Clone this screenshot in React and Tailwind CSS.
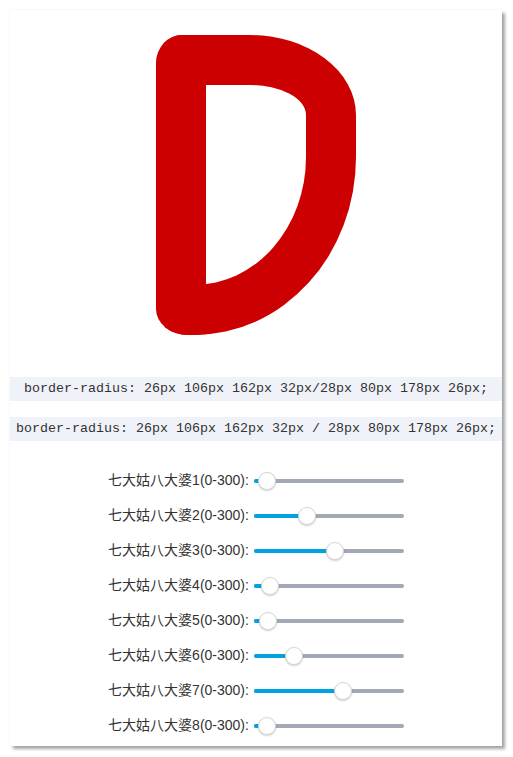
import React, { useState } from 'react'

const labels = [1, 2, 3, 4, 5, 6, 7, 8]

/* ---------- Slider ---------- */

const Slider = ({ value, onChange }) => {
  const pct = (value / 300) * 100
  return (
    <div className="relative w-[150px] h-[20px] flex items-center">
      <div className="w-full h-[4px] rounded-full bg-[#a2a8b5]" />
      <div
        className="absolute left-0 h-[4px] rounded-full bg-[#00a2e0]"
        style={{ width: `${pct}%` }}
      />
      <div
        className="absolute w-[18px] h-[18px] -translate-x-1/2 rounded-full bg-white border border-[#d6d6d6] shadow-[0_1px_2px_rgba(0,0,0,0.2)]"
        style={{ left: `${pct}%` }}
      />
      <input
        type="range"
        min="0"
        max="300"
        value={value}
        onChange={(e) => onChange(Number(e.target.value))}
        className="absolute inset-0 w-full opacity-0 cursor-pointer"
      />
    </div>
  )
}

/* ---------- Main ---------- */

const App = () => {
  const [vals, setVals] = useState([26, 106, 162, 32, 28, 80, 178, 26])

  const setVal = (i, v) =>
    setVals((prev) => prev.map((x, j) => (j === i ? v : x)))

  const [a, b, c, d, e, f, g, h] = vals
  const radius = `${a}px ${b}px ${c}px ${d}px / ${e}px ${f}px ${g}px ${h}px`

  return (
    <div className="bg-white min-h-[757px] pt-[10px] pl-[10px]">
      <div className="w-[492px] h-[736px] bg-white shadow-[3px_3px_3px_rgba(0,0,0,0.35),0_0_2px_rgba(0,0,0,0.08)] pt-[25px]">
        {/* the D */}
        <div
          className="mx-auto w-[200px] h-[300px] border-[50px] border-[#cc0000]"
          style={{ borderRadius: radius }}
        />

        {/* code lines */}
        <div className="mt-[42px] h-[24px] bg-[#eff2f8] flex items-center justify-center font-['Liberation_Mono',monospace] text-[13.33px] text-[#333] whitespace-pre">
          border-radius: {a}px {b}px {c}px {d}px/{e}px {f}px {g}px {h}px;
        </div>
        <div className="mt-[16px] h-[24px] bg-[#eff2f8] flex items-center justify-center font-['Liberation_Mono',monospace] text-[13.33px] text-[#333] whitespace-pre">
          border-radius: {radius};
        </div>

        {/* sliders */}
        <div className="mt-[22px] flex flex-col">
          {labels.map((n, i) => (
            <div key={n} className="h-[35px] flex items-center justify-center gap-[5px]">
              <span className="text-[14px] text-[#333] font-['Liberation_Sans','Noto_Sans_CJK_SC',sans-serif]">
                七大姑八大婆{n}(0-300):
              </span>
              <Slider value={vals[i]} onChange={(v) => setVal(i, v)} />
            </div>
          ))}
        </div>
      </div>
    </div>
  )
}

export default App
